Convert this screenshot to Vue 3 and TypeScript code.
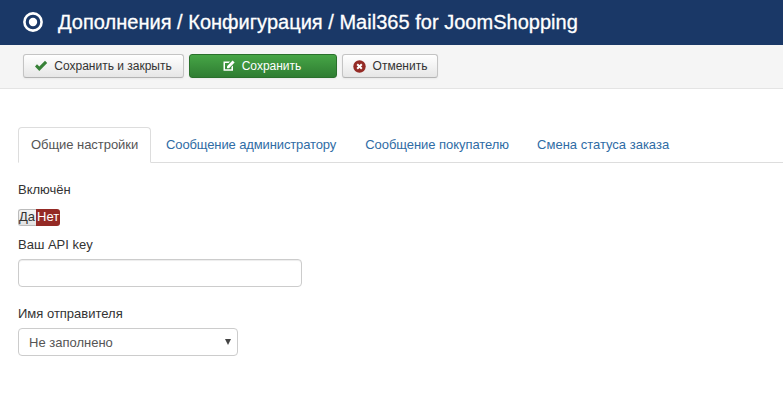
<script setup lang="ts">
const tabs: string[] = ['Общие настройки', 'Сообщение администратору', 'Сообщение покупателю', 'Смена статуса заказа']
</script>

<template>
  <div class="page">
    <header class="head">
      <svg class="logo" width="22" height="22" viewBox="0 0 22 22"><circle cx="11" cy="11" r="8.6" fill="none" stroke="#fff" stroke-width="2.6"/><circle cx="11" cy="11" r="4.2" fill="#fff"/></svg>
      <h1>Дополнения / Конфигурация / Mail365 for JoomShopping</h1>
    </header>
    <div class="toolbar">
      <button class="btn b1">
        <svg width="14" height="12" viewBox="0 0 14 12"><path d="M1 6.5 3 4.3 5.3 6.6 11 .8 13.2 3 5.3 11z" fill="#378137"/></svg>
        Сохранить и закрыть
      </button>
      <button class="btn green b2">
        <svg width="13" height="12" viewBox="0 0 13 12"><path d="M1.5 1.5H8L6.6 3H3v6.2h6.4V7L11 5.5V10.8H1.5z" fill="#fff"/><path d="M5 6.2 10.6.6 12.6 2.5 7 8.2H5z" fill="#fff"/></svg>
        Сохранить
      </button>
      <button class="btn b3">
        <svg width="13" height="13" viewBox="0 0 13 13"><circle cx="6.5" cy="6.5" r="6.2" fill="#942a25"/><path d="M4.2 4.2 8.8 8.8M8.8 4.2 4.2 8.8" stroke="#fff" stroke-width="2"/></svg>
        Отменить
      </button>
    </div>
    <main class="content">
      <nav class="tabs">
        <a v-for="(t, i) in tabs" :key="t" class="tab" :class="[`tab${i}`, { active: i === 0 }]">{{ t }}</a>
      </nav>
      <label class="lbl first">Включён</label>
      <div class="switch"><span class="yes">Да</span><span class="no">Нет</span></div>
      <label class="lbl api">Ваш API key</label>
      <input class="field" type="text" />
      <label class="lbl name">Имя отправителя</label>
      <div class="select">Не заполнено<i class="caret"></i></div>
    </main>
  </div>
</template>

<style>
html, body { margin: 0; background: #fff; overflow: hidden; }
</style>

<style scoped>
.page { width: 783px; height: 416px; font-family: "Liberation Sans", Arial, sans-serif; font-size: 13px; color: #333; overflow: hidden; }
.head { height: 45px; background: #1a3867; display: flex; align-items: center; padding-left: 22px; box-sizing: border-box; color: #fff; }
.logo { margin-right: 14px; margin-top: -2px; }
h1 { margin: 0; font-size: 20px; font-weight: 400; line-height: 45px; white-space: nowrap; letter-spacing: 0.02px; -webkit-text-stroke: 0.3px #fff; }
.toolbar { height: 44px; box-sizing: border-box; background: #f5f5f5; border-bottom: 1px solid #e4e4e4; display: flex; align-items: flex-start; gap: 5px; padding: 9px 0 0 23px; }
.btn { height: 24px; box-sizing: border-box; border: 1px solid #c4c4c4; border-bottom-color: #b3b3b3; border-radius: 3px; background: linear-gradient(#fff, #e6e6e6); font: 12px "Liberation Sans", Arial, sans-serif; color: #333; display: flex; align-items: center; justify-content: center; gap: 6px; padding: 0; box-shadow: 0 1px 2px rgba(0,0,0,.05); }
.b1 { width: 161px; padding-right: 1px; }
.b2 { width: 148px; gap: 7px; padding-right: 3px; }
.b3 { width: 96px; gap: 7px; }
.green { background: linear-gradient(#46a546, #2f7d32); border-color: #2a702c; color: #fff; }
.content { padding: 38px 0 0 18px; }
.tabs { display: flex; height: 36px; box-sizing: border-box; border-bottom: 1px solid #ddd; margin-right: -1px; }
.tab { height: 36px; box-sizing: border-box; padding: 9px 14px 0; line-height: 17px; color: #2f6ca5; white-space: nowrap; margin-right: 1px; }
.tab.active { width: 133px; color: #555; background: #fff; border: 1px solid #ddd; border-bottom-color: #fff; border-radius: 4px 4px 0 0; padding: 8px 12px 0; }
.tab0 { letter-spacing: -0.05px; }
.tab1 { letter-spacing: -0.12px; }
.tab2 { letter-spacing: -0.05px; margin-right: 0; }
.lbl { display: block; line-height: 18px; color: #333; }
.first { margin-top: 18px; }
.switch { display: flex; width: 42px; height: 17px; margin-top: 10px; line-height: 17px; font-size: 13px; }
.yes { width: 18px; box-sizing: border-box; background: linear-gradient(#f4f4f4, #e2e2e2); border: 1px solid #bbb; border-right: 0; border-radius: 3px 0 0 3px; line-height: 14px; color: #333; }
.no { width: 24px; background: #942a25; color: #fff; border-radius: 0 3px 3px 0; padding-left: 1px; box-sizing: border-box; line-height: 16px; }
.api { margin-top: 10px; }
.field { display: block; width: 284px; height: 28px; box-sizing: border-box; border: 1px solid #ccc; border-radius: 4px; margin-top: 5px; padding: 0; background: #fff; box-shadow: inset 0 1px 1px rgba(0,0,0,.075); }
.name { margin-top: 18px; }
.select { position: relative; width: 220px; height: 28px; box-sizing: border-box; border: 1px solid #ccc; border-radius: 4px; margin-top: 5px; padding-left: 10px; line-height: 28px; color: #555; background: #fff; }
.caret { position: absolute; right: 6px; top: 10px; width: 0; height: 0; border-left: 3px solid transparent; border-right: 3px solid transparent; border-top: 6px solid #444; }
</style>
